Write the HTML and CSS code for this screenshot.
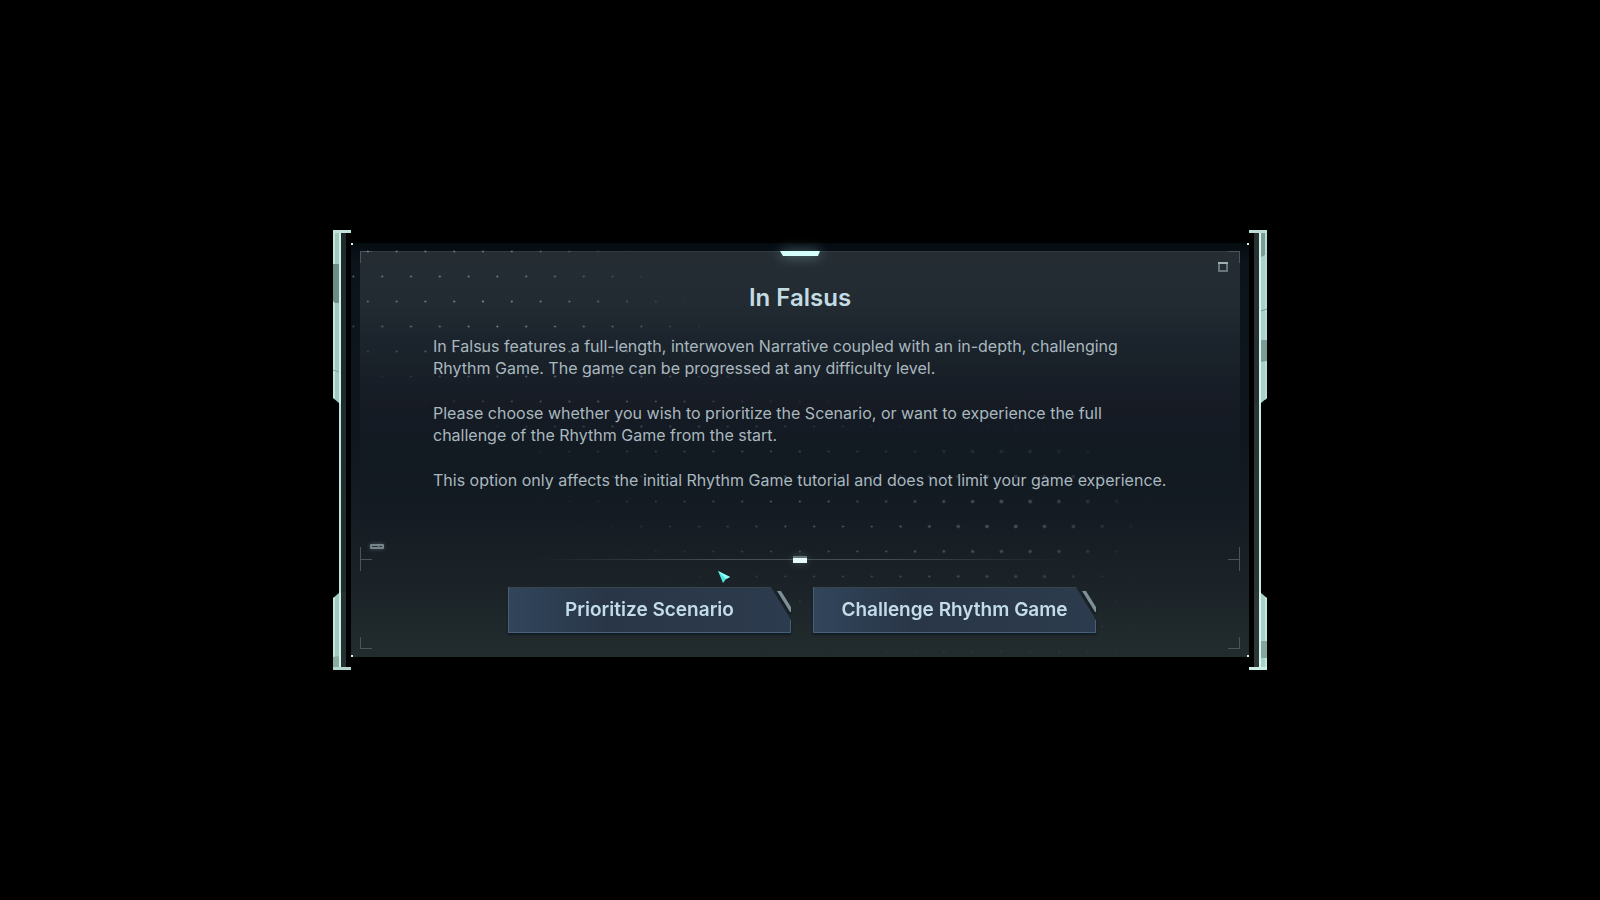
FILE: index.html
```html
<!DOCTYPE html>
<html lang="en">
<head>
<meta charset="utf-8">
<meta name="viewport" content="width=device-width, initial-scale=1">
<title>In Falsus</title>
<link rel="stylesheet" href="styles.css">
</head>
<body>
<main class="stage">
  <section class="dialog" role="dialog" aria-labelledby="dialog-title" aria-describedby="dialog-text">
    <div class="rail rail-left" aria-hidden="true">
      <svg class="rail-end" width="18" height="174" viewBox="0 0 18 174">
        <path d="M8 3h5v171H8z" fill="#20292b"/>
        <path d="M0 0h8v174H6v-1l-6-5z" fill="#a3c9bf"/>
        <path d="M0 0h2v169l-2-1z" fill="#c3e8de"/>
        <path d="M6 0h2v174H6z" fill="#c9f5e9"/>
        <path d="M0 34h6v39H2l-2-2z" fill="#708a84"/>
        <path d="M0 0h18v3H0z" fill="#c3e3dc"/>
        <path d="M0 140l6 2" stroke="#7fa199"/>
      </svg>
      <div class="rail-line"></div>
      <svg class="rail-end" width="18" height="78" viewBox="0 0 18 78">
        <path d="M8 0h5v75H8z" fill="#262f31"/>
        <path d="M0 6l6-5V0h2v78H0z" fill="#a3c9bf"/>
        <path d="M0 6l2-1v73H0z" fill="#c3e8de"/>
        <path d="M6 0h2v78H6z" fill="#c9f5e9"/>
        <path d="M0 65l6-1v11H0z" fill="#8caaa2"/>
        <path d="M0 75h18v3H0z" fill="#b5d6cf"/>
      </svg>
    </div>

    <div class="panel">
      <span class="pin pin-tl"></span><span class="pin pin-tr"></span>
      <span class="pin pin-bl"></span><span class="pin pin-br"></span>

      <div class="content">
        <span class="corner corner-tl"></span><span class="corner corner-tr"></span>
        <svg class="tab" width="40" height="5" viewBox="0 0 40 5" aria-hidden="true"><path d="M0 0h40l-2 5H3z" fill="#d4fffb"/></svg>
        <svg class="square" width="10" height="10" viewBox="0 0 10 10" aria-hidden="true"><path d="M1 1h8v8H1z" fill="none" stroke="#66757b" stroke-width="2"/><path d="M0 1h10" stroke="#a0afb2" stroke-width="2"/></svg>
        <h1 class="title" id="dialog-title">In Falsus</h1>
        <div class="text" id="dialog-text">
          <p>In Falsus features a full-length, interwoven Narrative coupled with an in-depth, challenging<br>Rhythm Game. The game can be progressed at any difficulty level.</p>
          <p>Please choose whether you wish to prioritize the Scenario, or want to experience the full<br>challenge of the Rhythm Game from the start.</p>
          <p>This option only affects the initial Rhythm Game tutorial and does not limit your game experience.</p>
        </div>
        <svg class="chip" width="14" height="5" viewBox="0 0 14 5" aria-hidden="true"><rect width="14" height="5" rx="1" fill="#75848a"/><path d="M2 2h5l2 1H2zM9 2h3v1h-2z" fill="#263037"/></svg>
      </div>

      <div class="divider" aria-hidden="true">
        <span class="tee tee-left"></span>
        <span class="rule"></span>
        <span class="tee tee-right"></span>
      </div>

      <svg class="dots" aria-hidden="true">
        <defs>
          <pattern id="fine" width="28.8" height="50" patternUnits="userSpaceOnUse">
            <circle cx="16.8" cy="8.500" r="1" fill="#a4b3bb"/>
            <circle cx="2.400" cy="33.500" r="1" fill="#a4b3bb"/>
          </pattern>
          <pattern id="coarse" width="28.8" height="50" patternUnits="userSpaceOnUse">
            <circle cx="16.8" cy="8.500" r="1.900" fill="#72828a"/>
            <circle cx="2.400" cy="33.500" r="1.900" fill="#72828a"/>
          </pattern>
          <radialGradient id="fadeA" gradientUnits="userSpaceOnUse" cx="0" cy="0" r="1" gradientTransform="translate(120 55) rotate(22) scale(290 120)">
            <stop offset="0" stop-color="#fff" stop-opacity=".75"/><stop offset=".5" stop-color="#fff" stop-opacity=".5"/><stop offset="1" stop-color="#fff" stop-opacity="0"/>
          </radialGradient>
          <radialGradient id="fadeB" gradientUnits="userSpaceOnUse" cx="0" cy="0" r="1" gradientTransform="translate(470 270) rotate(20) scale(380 130)">
            <stop offset="0" stop-color="#fff" stop-opacity=".5"/><stop offset="1" stop-color="#fff" stop-opacity="0"/>
          </radialGradient>
          <radialGradient id="fadeC" gradientUnits="userSpaceOnUse" cx="0" cy="0" r="1" gradientTransform="translate(660 270) scale(140 95)">
            <stop offset="0" stop-color="#fff" stop-opacity=".5"/><stop offset="1" stop-color="#fff" stop-opacity="0"/>
          </radialGradient>
          <mask id="maskFine"><rect width="100%" height="100%" fill="url(#fadeA)"/><rect width="100%" height="100%" fill="url(#fadeB)"/></mask>
          <mask id="maskCoarse"><rect width="100%" height="100%" fill="url(#fadeC)"/></mask>
        </defs>
        <rect width="100%" height="100%" fill="url(#fine)" mask="url(#maskFine)"/>
        <rect width="100%" height="100%" fill="url(#coarse)" mask="url(#maskCoarse)"/>
      </svg>

      <div class="footer">
        <span class="corner corner-bl"></span><span class="corner corner-br"></span>
        <button class="choice" type="button">
          <svg class="choice-shape" viewBox="0 0 283 46" preserveAspectRatio="none" aria-hidden="true">
            <defs>
              <linearGradient id="face" x1="0" y1="0" x2="1" y2="0"><stop offset="0" stop-color="#31455b"/><stop offset=".35" stop-color="#293647"/><stop offset="1" stop-color="#2c3b4d"/></linearGradient>
            </defs>
            <path d="M0 0h263l20 33v13H0z" fill="url(#face)"/>
            <path d="M0 .5h263" stroke="#35444f"/>
            <path d="M.5 0v45.500H282.500V33" fill="none" stroke="#46607a"/>
          </svg>
          <svg class="slash" width="14" height="21" viewBox="0 0 14 21" aria-hidden="true"><path d="M0 0h4l10 16v5h-1z" fill="#7d9096"/></svg>
          <span class="choice-label">Prioritize Scenario</span>
        </button>
        <button class="choice" type="button">
          <svg class="choice-shape" viewBox="0 0 283 46" preserveAspectRatio="none" aria-hidden="true">
            <path d="M0 0h263l20 33v13H0z" fill="url(#face)"/>
            <path d="M0 .5h263" stroke="#35444f"/>
            <path d="M.5 0v45.500H282.500V33" fill="none" stroke="#46607a"/>
          </svg>
          <svg class="slash" width="14" height="21" viewBox="0 0 14 21" aria-hidden="true"><path d="M0 0h4l10 16v5h-1z" fill="#7d9096"/></svg>
          <span class="choice-label">Challenge Rhythm Game</span>
        </button>
      </div>
      <svg class="cursor" width="13" height="13" viewBox="0 0 13 13" aria-hidden="true"><path d="M0 0l12 6-4 2-3 4z" fill="#4fe6dc"/><path d="M0 0l8 8 4-2z" fill="#96fff5"/></svg>
    </div>

    <div class="rail rail-right" aria-hidden="true">
      <svg class="rail-end" width="18" height="174" viewBox="0 0 18 174">
        <path d="M5 3h5v171H5z" fill="#2a3133"/>
        <path d="M18 0h-8v174h2v-1l6-5z" fill="#a9d0c9"/>
        <path d="M16 3h2v165l-2 2z" fill="#b8dcd5"/>
        <path d="M10 3h2v171h-2z" fill="#d0f8ee"/>
        <path d="M12 3h4v22l-4 2zM12 110h6v21l-6 1z" fill="#7d9a95"/>
        <path d="M12 81l6-2" stroke="#7d9a95"/>
        <path d="M0 0h18v3H0z" fill="#bcdcd6"/>
      </svg>
      <div class="rail-line"></div>
      <svg class="rail-end" width="18" height="78" viewBox="0 0 18 78">
        <path d="M5 0h5v75H5z" fill="#2e3638"/>
        <path d="M18 6l-6-5V0h-2v78h8z" fill="#a9d0c9"/>
        <path d="M16 5l2 1v72h-2z" fill="#c3e8de"/>
        <path d="M10 0h2v78h-2z" fill="#d0f8ee"/>
        <path d="M12 49h6v17h-6z" fill="#87a59f"/>
        <path d="M0 75h18v3H0z" fill="#cdeee6"/>
      </svg>
    </div>
  </section>
</main>
</body>
</html>
```
FILE: styles.css
```css
* { box-sizing: border-box; }

body {
  margin: 0;
  background: #000;
  font-family: Inter, "Liberation Sans", sans-serif;
}

.stage {
  min-height: 100vh;
  padding: 16px;
  display: grid;
  place-items: center;
}

.dialog {
  width: 100%;
  max-width: 934px;
  display: grid;
  grid-template-columns: 18px 1fr 18px;
}

.rail { display: flex; flex-direction: column; }
.rail-end { display: block; flex: none; }
.rail-line { flex: 1; }
.rail-left .rail-line {
  background: linear-gradient(90deg, transparent 6px, #b9e6da 6px, #b9e6da 8px, #222b2d 8px, #222b2d 13px, transparent 13px);
}
.rail-right .rail-line {
  background: linear-gradient(90deg, transparent 5px, #2c3436 5px, #2c3436 10px, #c6efe5 10px, #c6efe5 12px, transparent 12px);
}

.panel {
  position: relative;
  margin: 13px 0;
  padding: 8px 9px 0;
  background: linear-gradient(180deg, #040b11 0, #0c131a 20px, #10161e 45%, #181f25 75%, #222c2e 100%);
}

.dots {
  position: absolute;
  inset: 0;
  width: 100%;
  height: 100%;
  pointer-events: none;
}

.pin { position: absolute; width: 2px; height: 2px; background: #dff5f2; }
.pin-tl { top: 0; left: 0; }
.pin-tr { top: 0; right: 0; }
.pin-bl { bottom: 0; left: 0; }
.pin-br { bottom: 0; right: 0; }

.content {
  position: relative;
  padding: 28px 56px 0 73px;
  min-height: 296px;
  background: linear-gradient(180deg, #252d33 0, #222b32 18%, #1b242c 30%, #161b24 52%, #121a22 68%, rgba(24, 30, 37, 0) 100%);
  border-top: 1px solid #303a41;
}

.corner { position: absolute; width: 12px; height: 12px; border: 0 solid #4a555b; }
.corner-tl { top: -1px; left: 0; border-width: 1px 0 0 1px; }
.corner-tr { top: -1px; right: 0; border-width: 1px 1px 0 0; }
.corner-bl { bottom: 8px; left: 0; border-width: 0 0 1px 1px; }
.corner-br { bottom: 8px; right: 0; border-width: 0 1px 1px 0; }

.tab {
  position: absolute;
  top: -1px;
  left: calc(50% - 20px);
  filter: drop-shadow(0 0 6px rgba(160, 215, 215, .6));
}
.square { position: absolute; top: 10px; right: 12px; }
.chip { position: absolute; left: 10px; bottom: -2px; filter: drop-shadow(0 0 2px rgba(120, 140, 150, .5)); }

.title {
  margin: 0 -56px 0 -73px;
  text-align: center;
  font-size: 24px;
  line-height: 36px;
  font-weight: 600;
  color: #c3dce3;
}

.text {
  margin-top: 19px;
  font-size: 16px;
  line-height: 22px;
  color: #a9b8bf;
}
.text p { margin: 0 0 23px; }

.divider {
  position: relative;
  height: 24px;
  display: flex;
  align-items: center;
  justify-content: space-between;
}
.tee { width: 12px; height: 24px; }
.tee-left { border-left: 1px solid #4a555b; background: linear-gradient(#4a555b, #4a555b) center / 100% 1px no-repeat; }
.tee-right { border-right: 1px solid #4a555b; background: linear-gradient(#4a555b, #4a555b) center / 100% 1px no-repeat; }
.rule {
  position: relative;
  width: 60%;
  height: 1px;
  background: linear-gradient(90deg, transparent, #414f55 35%, #414f55 65%, transparent);
}
.rule::after {
  content: "";
  position: absolute;
  top: -3px;
  left: calc(50% - 7px);
  width: 14px;
  height: 5px;
  background: #e8fafa;
  border-top: 2px solid #63777b;
  box-shadow: 0 0 8px rgba(160, 200, 200, .3);
}

.footer {
  position: relative;
  display: flex;
  flex-wrap: wrap;
  justify-content: center;
  gap: 22px;
  padding: 16px 0 24px 4px;
}

.choice {
  position: relative;
  width: 283px;
  height: 46px;
  padding: 0;
  border: 0;
  background: none;
  color: #c3dcea;
  font: 600 19px/24px Inter, "Liberation Sans", sans-serif;
  cursor: pointer;
  filter: drop-shadow(0 2px 1px rgba(12, 20, 30, .7));
}
.choice-shape { position: absolute; inset: 0; width: 100%; height: 100%; }
.slash { position: absolute; top: 4px; right: 0; }
.choice-label { position: relative; }

.cursor { position: absolute; top: 328px; left: 367px; }
```
